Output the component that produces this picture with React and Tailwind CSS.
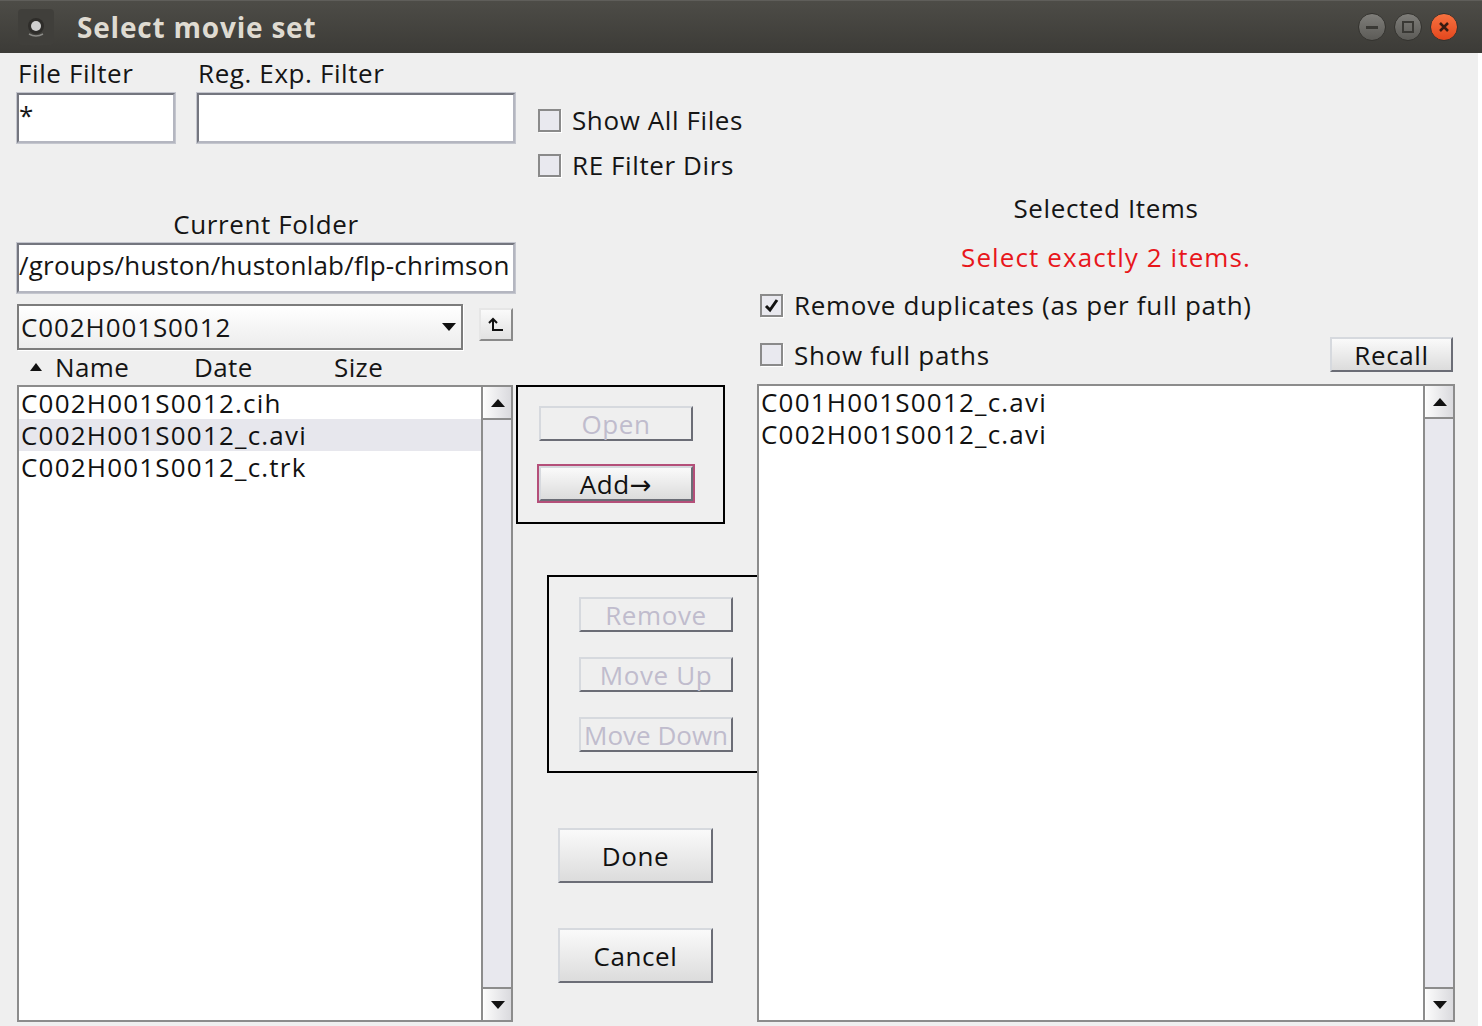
import React from 'react';

const font = "font-['Open_Sans','DejaVu_Sans',sans-serif]";

const TextField = ({ value, className }) => (
  <div
    className={`h-[50px] bg-white border-2 border-t-[#74767f] border-l-[#74767f] border-b-[#b4b6c0] border-r-[#b4b6c0] outline outline-1 outline-[#c4c6ce] overflow-hidden whitespace-nowrap text-[26px] tracking-[0.2px] leading-[40px] ${className}`}
  >
    {value}
  </div>
);

const CheckBox = ({ checked }) => (
  <div className="w-[23px] h-[23px] shrink-0 border-2 border-[#8a8a8a] bg-[#e9e9ef] shadow-[1px_1px_0_#ffffff] flex items-center justify-center">
    {checked && (
      <svg width="15" height="15" viewBox="0 0 15 15">
        <path d="M2 8 L6 12 L13 2" stroke="#111" strokeWidth="3" fill="none" />
      </svg>
    )}
  </div>
);

const Check = ({ label, checked }) => (
  <div className="flex items-center h-[36px]">
    <CheckBox checked={checked} />
    <span className="ml-[11px] text-[26px] tracking-[0.6px] leading-[30px] text-[#151515] whitespace-nowrap">{label}</span>
  </div>
);

const Button = ({ children, disabled, focused, className }) => (
  <div
    className={`flex items-center justify-center whitespace-nowrap text-[26px] tracking-[0.6px] leading-none ${
      focused ? 'border-2 border-[#b44f79]' : ''
    } ${className}`}
  >
    <div
      className={`w-full h-full flex items-center justify-center border-2 border-t-[#d6d9de] border-l-[#d6d9de] border-b-[#6b6d76] border-r-[#6b6d76] ${
        disabled
          ? 'bg-[#efefef] text-[#c0bccd]'
          : 'bg-gradient-to-b from-[#fafafa] to-[#dcdcdc] text-[#111]'
      }`}
    >
      {children}
    </div>
  </div>
);

const ScrollBtn = ({ down }) => (
  <div className="h-[31px] shrink-0 bg-gradient-to-r from-[#fbfbfb] to-[#dadade] flex items-center justify-center border-l border-white">
    <svg width="16" height="10" viewBox="0 0 16 10">
      {down ? <path d="M1 1 L15 1 L8 9 Z" fill="#111" /> : <path d="M1 9 L15 9 L8 1 Z" fill="#111" />}
    </svg>
  </div>
);

const ListBox = ({ items, selected, className }) => (
  <div className={`flex border-2 border-[#8c8c8c] bg-white ${className}`}>
    <div className="flex-1 flex flex-col overflow-hidden">
      {items.map((it, i) => (
        <div
          key={it}
          className={`h-[32px] leading-[32px] pl-[2px] text-[26px] tracking-[1.2px] text-[#111] whitespace-nowrap ${
            i === selected ? 'bg-[#e7e7ed]' : ''
          }`}
        >
          {it}
        </div>
      ))}
    </div>
    <div className="w-[30px] shrink-0 flex flex-col border-l-2 border-[#8c8c8c]">
      <ScrollBtn />
      <div className="flex-1 bg-[#e8e8ee] border-y-2 border-[#8c8c8c]" />
      <ScrollBtn down />
    </div>
  </div>
);

const WinBtn = ({ children, close }) => (
  <div
    className={`w-[28px] h-[28px] rounded-full flex items-center justify-center border border-[#34332f] ${
      close
        ? 'bg-gradient-to-b from-[#f7713f] to-[#e4461c]'
        : 'bg-gradient-to-b from-[#7f7e7a] to-[#5c5b57]'
    }`}
  >
    {children}
  </div>
);

export default function App() {
  return (
    <div className={`w-[1482px] h-[1026px] bg-[#efefef] flex flex-col overflow-hidden ${font}`}>
      {/* title bar */}
      <div className="h-[53px] shrink-0 flex items-center bg-gradient-to-b from-[#4d4c47] to-[#3c3b37] border-t border-[#5f5e5a]">
        <div className="ml-[18px] w-[36px] h-[36px] rounded-[4px] bg-[#403f3b] flex items-center justify-center">
          <svg width="28" height="28" viewBox="0 0 28 28">
            <circle cx="14" cy="13" r="8" fill="#2e2d2a" />
            <circle cx="14" cy="13" r="5" fill="#cfcfcf" />
            <path d="M7 21 Q14 25 21 21" stroke="#8a8a86" strokeWidth="1.5" fill="none" />
          </svg>
        </div>
        <span className="ml-[23px] text-[28px] font-bold text-[#dfdbd2] tracking-[0.8px]">Select movie set</span>
        <div className="ml-auto mr-[24px] flex gap-[8px]">
          <WinBtn>
            <div className="w-[12px] h-[3px] bg-[#3a3935]" />
          </WinBtn>
          <WinBtn>
            <div className="w-[12px] h-[12px] border-2 border-[#3a3935]" />
          </WinBtn>
          <WinBtn close>
            <svg width="12" height="12" viewBox="0 0 12 12">
              <path d="M2 2 L10 10 M10 2 L2 10" stroke="#3a1c12" strokeWidth="2.5" />
            </svg>
          </WinBtn>
        </div>
      </div>

      {/* body */}
      <div className="flex-1 flex pl-[17px] text-[#151515] border-r-[4px] border-white">
        {/* left + middle */}
        <div className="w-[740px] shrink-0 flex flex-col">
          <div className="h-[156px] shrink-0 flex">
            <div className="w-[158px] pt-[5px]">
              <div className="h-[30px] leading-[30px] text-[26px] tracking-[0.6px] pl-[1px] whitespace-nowrap">File Filter</div>
              <TextField value="*" className="mt-[5px] w-[158px]" />
            </div>
            <div className="w-[318px] ml-[22px] pt-[5px]">
              <div className="h-[30px] leading-[30px] text-[26px] tracking-[0.6px] pl-[1px] whitespace-nowrap">Reg. Exp. Filter</div>
              <TextField value="" className="mt-[5px] w-[318px]" />
            </div>
            <div className="ml-[23px] pt-[49px] flex flex-col gap-[9px]">
              <Check label="Show All Files" />
              <Check label="RE Filter Dirs" />
            </div>
          </div>

          <div className="flex">
            {/* left panel */}
            <div className="w-[498px] shrink-0 flex flex-col">
              <div className="h-[30px] leading-[30px] text-[26px] tracking-[0.6px] text-center">Current Folder</div>
              <TextField value="/groups/huston/hustonlab/flp-chrimson" className="mt-[4px] w-[498px]" />
              <div className="mt-[11px] flex items-start">
                <div className="w-[446px] h-[46px] border-2 border-[#7c7c7c] shadow-[1px_1px_0_#ffffff] bg-gradient-to-b from-[#ffffff] to-[#ececec] flex items-center pl-[2px] pr-[5px]">
                  <span className="text-[26px] tracking-[0.9px] leading-none flex-1">C002H001S0012</span>
                  <svg width="14" height="8" viewBox="0 0 14 8">
                    <path d="M0 0 L14 0 L7 8 Z" fill="#111" />
                  </svg>
                </div>
                <div className="ml-[16px] mt-[4px] w-[34px] h-[33px] border-2 border-t-[#e6e6e6] border-l-[#e6e6e6] border-b-[#8a8a8a] border-r-[#8a8a8a] bg-gradient-to-b from-[#fafafa] to-[#e2e2e2] flex items-center justify-center">
                  <svg width="18" height="16" viewBox="0 0 18 16">
                    <path d="M6 3 L6 13 L16 13" stroke="#111" strokeWidth="2" fill="none" />
                    <path d="M2 6 L6 2 L10 6" stroke="#111" strokeWidth="2" fill="none" />
                  </svg>
                </div>
              </div>
              <div className="mt-[2px] h-[30px] flex items-center text-[26px] tracking-[0.4px]">
                <svg className="ml-[13px]" width="12" height="8" viewBox="0 0 12 8">
                  <path d="M0 8 L12 8 L6 0 Z" fill="#111" />
                </svg>
                <span className="ml-[13px] w-[139px]">Name</span>
                <span className="w-[140px]">Date</span>
                <span>Size</span>
              </div>
              <ListBox
                className="mt-[3px] h-[637px] w-[496px]"
                items={['C002H001S0012.cih', 'C002H001S0012_c.avi', 'C002H001S0012_c.trk']}
                selected={1}
              />
            </div>

            {/* middle panel */}
            <div className="w-[242px] shrink-0 flex flex-col">
              <div className="mt-[176px] ml-[1px] w-[209px] h-[139px] border-2 border-black flex flex-col">
                <Button disabled className="mt-[19px] ml-[21px] w-[154px] h-[35px]">Open</Button>
                <Button focused className="mt-[23px] ml-[19px] w-[158px] h-[39px]">Add→</Button>
              </div>
              <div className="mt-[51px] ml-[32px] w-[210px] h-[198px] border-2 border-r-0 border-black flex flex-col gap-[25px] pt-[20px]">
                <Button disabled className="ml-[30px] w-[154px] h-[35px]">Remove</Button>
                <Button disabled className="ml-[30px] w-[154px] h-[35px]">Move Up</Button>
                <Button disabled className="ml-[30px] w-[154px] h-[35px] tracking-[0px]">Move Down</Button>
              </div>
              <Button className="mt-[55px] ml-[43px] w-[155px] h-[55px]">Done</Button>
              <Button className="mt-[45px] ml-[43px] w-[155px] h-[55px]">Cancel</Button>
            </div>
          </div>
        </div>

        {/* right column */}
        <div className="w-[698px] shrink-0 flex flex-col pt-[140px]">
          <div className="h-[30px] leading-[30px] text-[26px] tracking-[0.6px] text-center">Selected Items</div>
          <div className="mt-[19px] h-[30px] leading-[30px] text-[26px] tracking-[1.1px] text-center text-[#e8161b]">Select exactly 2 items.</div>
          <div className="mt-[18px] ml-[3px] h-[30px] flex items-center">
            <CheckBox checked />
            <span className="ml-[11px] text-[26px] tracking-[0.7px] leading-[30px] whitespace-nowrap">Remove duplicates (as per full path)</span>
          </div>
          <div className="mt-[17px] h-[35px] flex items-center">
            <div className="ml-[3px] flex items-center">
              <CheckBox />
              <span className="ml-[11px] text-[26px] tracking-[0.7px] leading-[30px]">Show full paths</span>
            </div>
            <Button className="ml-auto mr-[2px] w-[123px] h-[35px]">Recall</Button>
          </div>
          <ListBox
            className="mt-[12px] h-[638px] w-[698px]"
            items={['C001H001S0012_c.avi', 'C002H001S0012_c.avi']}
            selected={-1}
          />
        </div>
      </div>
    </div>
  );
}
